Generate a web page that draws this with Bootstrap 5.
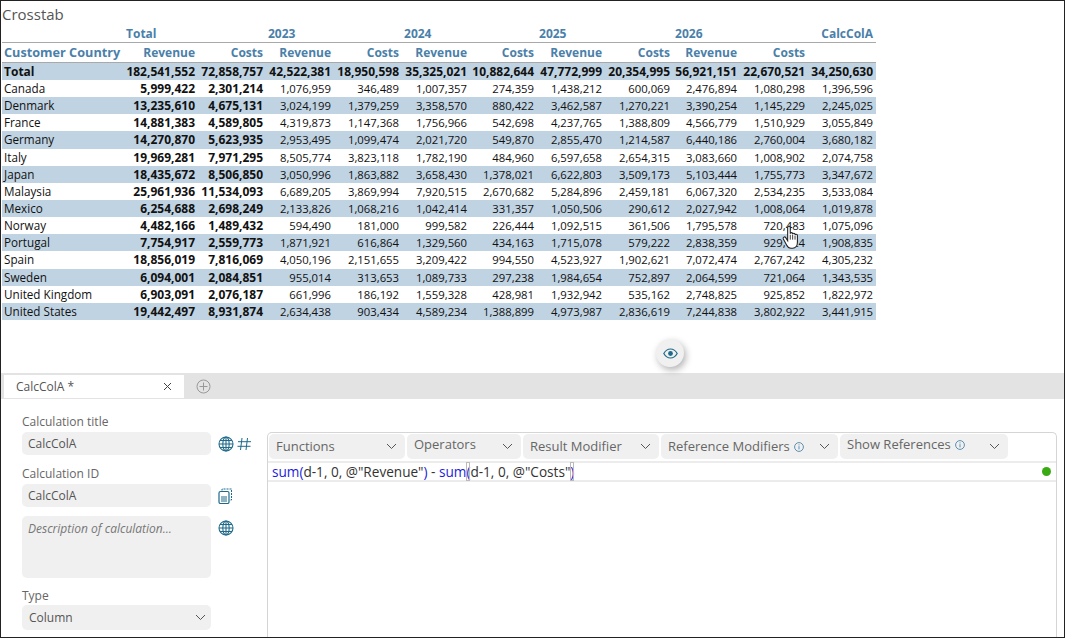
<!DOCTYPE html>
<html lang="en">
<head>
  <meta charset="UTF-8">
  <meta name="viewport" content="width=device-width, initial-scale=1.0">
  <title>Crosstab</title>
  <link href="https://cdn.jsdelivr.net/npm/bootstrap@5.3.0/dist/css/bootstrap.min.css" rel="stylesheet">
  <style>
    html, body { height: 100%; overflow: hidden; background: #fff; }
    body { font-family: "Open Sans", "Noto Sans", sans-serif; color: #444; }
    .app-frame { height: 638px; border: 1px solid #222; overflow: hidden; position: relative; }
    .top-pane { height: 372px; position: relative; flex: none; }
    .xtab-title { font-size: 15px; line-height: 20px; color: #555; padding: 3px 0 0 1px; height: 24px; }
    .xtab { table-layout: fixed; width: 874px; margin: 0 0 0 1px; border-collapse: collapse; font-size: 11.3px; color: #111; }
    .xtab td, .xtab th { padding: 0 1px 0 0; height: 17.15px; line-height: 17px; text-align: right; white-space: nowrap; overflow: visible; border: 0; background: transparent; color: inherit; box-shadow: none; }
    .xtab td:last-child { padding-right: 3px; }
    .xtab thead th { color: #4a80a9; font-size: 12px; font-weight: 700; }
    .xtab .head-top th { height: 17px; line-height: 17px; text-align: left; padding-left: 4px; border-bottom: 1px solid #a9a9a9; }
    .xtab .head-top th.calc-head { text-align: right; padding: 0 3px 0 0; }
    .xtab .head-sub th { height: 20px; border-bottom: 1px solid #a9a9a9; }
    .xtab .head-sub th:first-child { text-align: left; padding-left: 2px; font-size: 12.7px; }
    .xtab tbody td:first-child { text-align: left; padding-left: 2px; font-size: 11.7px; }
    .xtab tbody td.strong-cell, .xtab tbody tr:first-child td { font-weight: 700; font-size: 12px; }
    .xtab tbody tr:nth-child(odd) td { background: #c0d3e2; }
    .eye-btn { position: absolute; left: 655px; top: 338px; width: 28px; height: 28px; border-radius: 50%; background: #f0f0f0; box-shadow: 2px 3px 7px rgba(0,0,0,.3); }
    .hand-cursor { position: absolute; left: 780px; top: 224px; }
    .tab-strip { height: 26px; flex: none; background: #e3e3e3; padding: 2px 0 1px 3px; }
    .calc-tab { width: 180px; background: #fff; font-size: 12px; padding: 0 12px; color: #555; }
    .editor-area { flex: 1; padding: 15px 7px 0 21px; min-height: 0; }
    .form-side { width: 245px; flex: none; }
    .field-label { font-size: 12px; line-height: 16px; color: #666; margin-bottom: 2px; display: block; }
    .field-row { margin-bottom: 11px; }
    .field-row-tight { margin-bottom: 9px; }
    .type-label { margin-top: 10px; margin-bottom: 1px; }
    .soft-input { width: 189px; height: 23px; border: 0; border-radius: 5px; background-color: #f0f0f0; font-size: 12px; color: #555; padding: 0 6px; box-shadow: none; }
    .soft-input.desc-box { height: 62px; padding: 4px 6px; font-style: italic; resize: none; }
    .soft-input.desc-box::placeholder { color: #777; opacity: 1; }
    .soft-input.form-select { height: 25px; padding: 0 7px; background-size: 11px 7px; background-position: right 5px center; background-image: url("data:image/svg+xml,%3Csvg xmlns='http://www.w3.org/2000/svg' viewBox='0 0 11 7'%3E%3Cpath d='M1 1l4.5 4.5L10 1' fill='none' stroke='%23555' stroke-width='1'/%3E%3C/svg%3E"); }
    .side-icons { gap: 3px; margin-left: 7px; }
    .code-panel { width: 790px; flex: none; margin-top: 18px; border: 1px solid #d5d5d5; border-bottom: 0; border-radius: 5px 5px 0 0; padding: 1px 0 0 1px; height: 220px; }
    .tool-drop { height: 25px; background: #f0f0f0; border-radius: 5px; font-size: 13px; color: #666; padding: 0 8px 0 7px; border: 0; flex: none; }
    .tool-row { gap: 2px; }
    .code-line { height: 21px; margin: 2px 0 0 -1px; border-top: 2px solid #ececec; border-bottom: 2px solid #ececec; padding-left: 4px; font-size: 13.6px; line-height: 17px; color: #333; }
    .fn-word { color: #1c1cdc; }
    .paren { color: #1c1cdc; }
    .paren-match { color: #1c1cdc; outline: 1px solid #bbb; outline-offset: -1px; }
    .status-dot { width: 9px; height: 9px; border-radius: 50%; background: #3aaa13; margin-right: 5px; }
  </style>
</head>
<body>
  <div class="app-frame d-flex flex-column">
    <div class="top-pane">
      <div class="xtab-title">Crosstab</div>
      <table class="xtab" id="xtab">
        <colgroup>
          <col style="width:120px"><col style="width:74px"><col style="width:68px"><col style="width:68px"><col style="width:68px"><col style="width:68px"><col style="width:67px"><col style="width:68px"><col style="width:68px"><col style="width:67px"><col style="width:68px"><col style="width:70px">
        </colgroup>
        <thead>
          <tr class="head-top">
            <th></th><th colspan="2">Total</th><th colspan="2">2023</th><th colspan="2">2024</th><th colspan="2">2025</th><th colspan="2">2026</th><th class="calc-head">CalcColA</th>
          </tr>
          <tr class="head-sub">
            <th>Customer Country</th><th>Revenue</th><th>Costs</th><th>Revenue</th><th>Costs</th><th>Revenue</th><th>Costs</th><th>Revenue</th><th>Costs</th><th>Revenue</th><th>Costs</th><th></th>
          </tr>
        </thead>
        <tbody id="xtabBody"></tbody>
      </table>

      <svg class="hand-cursor" width="22" height="26" viewBox="0 0 20 24">
        <path d="M6 2.2c0-1.6 2.4-1.600 2.400 0v5.800c0-1.300 2.200-1.300 2.200 0v.6c0-1.300 2.200-1.300 2.200 0v.8c0-1.200 2.200-1.200 2.200.2v6.400c0 3-1.600 5.500-4.400 5.500H9c-2 0-3-1-4-3l-3-5.600c-.7-1.600 1.200-2.600 2.200-1.200L6 14.500z" fill="#fff" stroke="#222" stroke-width="1"/>
        <path d="M8.400 9v4.500M10.600 9v4.500M12.800 10v3.500" stroke="#222" stroke-width=".8" fill="none"/>
      </svg>

      <div class="eye-btn d-flex align-items-center justify-content-center">
        <svg width="15" height="11" viewBox="0 0 15 11">
          <path d="M.8 5.5C2.5 2.5 5 1 7.5 1s5 1.500 6.700 4.500C12.500 8.500 10 10 7.500 10S2.500 8.500.8 5.500z" fill="none" stroke="#1f6a8a" stroke-width="1.200"/>
          <circle cx="7.500" cy="5.500" r="2.400" fill="#1f6a8a"/>
        </svg>
      </div>
    </div>

    <div class="tab-strip d-flex align-items-stretch">
      <div class="calc-tab d-flex align-items-center justify-content-between">
        <span>CalcColA *</span>
        <svg width="9" height="9" viewBox="0 0 9 9"><path d="M1 1l7 7M8 1L1 8" stroke="#444" stroke-width="1"/></svg>
      </div>
      <div class="d-flex align-items-center ms-2 ps-1">
        <svg width="15" height="15" viewBox="0 0 15 15"><circle cx="7.500" cy="7.500" r="6.500" fill="none" stroke="#999"/><path d="M7.500 3.500v8M3.500 7.500h8" stroke="#999"/></svg>
      </div>
    </div>

    <div class="editor-area d-flex">
      <div class="form-side">
        <label class="field-label" for="calcTitle">Calculation title</label>
        <div class="d-flex align-items-center field-row">
          <input id="calcTitle" class="form-control soft-input" value="CalcColA">
          <div class="d-flex align-items-center side-icons">
            <svg width="16" height="16" viewBox="0 0 16 16"><g fill="none" stroke="#1f6a8a" stroke-width="1.100"><circle cx="8" cy="8" r="7"/><ellipse cx="8" cy="8" rx="3.200" ry="7"/><path d="M1 8h14M2 4.500h12M2 11.500h12M8 1v14"/></g></svg>
            <svg width="14" height="14" viewBox="0 0 14 14"><path d="M5 1L3.500 13M10.500 1L9 13M1 4.700h13M0.500 9.300h13" stroke="#1f6a8a" stroke-width="1" fill="none"/></svg>
          </div>
        </div>
        <label class="field-label" for="calcId">Calculation ID</label>
        <div class="d-flex align-items-center field-row-tight">
          <input id="calcId" class="form-control soft-input" value="CalcColA">
          <div class="d-flex align-items-center side-icons">
            <svg width="15" height="16" viewBox="0 0 15 16"><path d="M4 2.500V1h9.500v11H12" fill="none" stroke="#1f6a8a" stroke-width="1" stroke-dasharray="2 1"/><rect x="1" y="3.500" width="10" height="12" rx="1.500" fill="none" stroke="#1f6a8a" stroke-width="1.200"/><path d="M3 9h6M3 11h6M3 13h6" stroke="#1f6a8a" stroke-width="1"/></svg>
          </div>
        </div>
        <div class="d-flex align-items-start">
          <textarea class="form-control soft-input desc-box" placeholder="Description of calculation..."></textarea>
          <div class="d-flex align-items-center side-icons mt-1">
            <svg width="16" height="16" viewBox="0 0 16 16"><g fill="none" stroke="#1f6a8a" stroke-width="1.100"><circle cx="8" cy="8" r="7"/><ellipse cx="8" cy="8" rx="3.200" ry="7"/><path d="M1 8h14M2 4.500h12M2 11.500h12M8 1v14"/></g></svg>
          </div>
        </div>
        <label class="field-label type-label" for="calcType">Type</label>
        <select id="calcType" class="form-select soft-input"><option>Column</option></select>
      </div>

      <div class="code-panel">
        <div class="d-flex tool-row" id="toolRow"></div>
        <div class="code-line d-flex align-items-center justify-content-between">
          <div><span class="fn-word">sum</span><span class="paren">(</span>d-1, 0, @"Revenue"<span class="paren">)</span> - <span class="fn-word">sum</span><span class="paren-match">(</span>d-1, 0, @"Costs"<span class="paren-match">)</span></div>
          <span class="status-dot"></span>
        </div>
      </div>
    </div>
  </div>

  <script>
    // Crosstab rows: country, then total rev/costs, then rev/costs per year, then CalcColA
    const rows = [
      ['Total','182,541,552','72,858,757','42,522,381','18,950,598','35,325,021','10,882,644','47,772,999','20,354,995','56,921,151','22,670,521','34,250,630'],
      ['Canada','5,999,422','2,301,214','1,076,959','346,489','1,007,357','274,359','1,438,212','600,069','2,476,894','1,080,298','1,396,596'],
      ['Denmark','13,235,610','4,675,131','3,024,199','1,379,259','3,358,570','880,422','3,462,587','1,270,221','3,390,254','1,145,229','2,245,025'],
      ['France','14,881,383','4,589,805','4,319,873','1,147,368','1,756,966','542,698','4,237,765','1,388,809','4,566,779','1,510,929','3,055,849'],
      ['Germany','14,270,870','5,623,935','2,953,495','1,099,474','2,021,720','549,870','2,855,470','1,214,587','6,440,186','2,760,004','3,680,182'],
      ['Italy','19,969,281','7,971,295','8,505,774','3,823,118','1,782,190','484,960','6,597,658','2,654,315','3,083,660','1,008,902','2,074,758'],
      ['Japan','18,435,672','8,506,850','3,050,996','1,863,882','3,658,430','1,378,021','6,622,803','3,509,173','5,103,444','1,755,773','3,347,672'],
      ['Malaysia','25,961,936','11,534,093','6,689,205','3,869,994','7,920,515','2,670,682','5,284,896','2,459,181','6,067,320','2,534,235','3,533,084'],
      ['Mexico','6,254,688','2,698,249','2,133,826','1,068,216','1,042,414','331,357','1,050,506','290,612','2,027,942','1,008,064','1,019,878'],
      ['Norway','4,482,166','1,489,432','594,490','181,000','999,582','226,444','1,092,515','361,506','1,795,578','720,483','1,075,096'],
      ['Portugal','7,754,917','2,559,773','1,871,921','616,864','1,329,560','434,163','1,715,078','579,222','2,838,359','929,124','1,908,835'],
      ['Spain','18,856,019','7,816,069','4,050,196','2,151,655','3,209,422','994,550','4,523,927','1,902,621','7,072,474','2,767,242','4,305,232'],
      ['Sweden','6,094,001','2,084,851','955,014','313,653','1,089,733','297,238','1,984,654','752,897','2,064,599','721,064','1,343,535'],
      ['United Kingdom','6,903,091','2,076,187','661,996','186,192','1,559,328','428,981','1,932,942','535,162','2,748,825','925,852','1,822,972'],
      ['United States','19,442,497','8,931,874','2,634,438','903,434','4,589,234','1,388,899','4,973,987','2,836,619','7,244,838','3,802,922','3,441,915']
    ];

    const body = document.getElementById('xtabBody');
    rows.forEach(row => {
      const tr = document.createElement('tr');
      row.forEach((val, i) => {
        const td = document.createElement('td');
        td.innerText = val;
        if (i === 1 || i === 2) td.className = 'strong-cell';
        tr.appendChild(td);
      });
      body.appendChild(tr);
    });

    // Toolbar dropdowns: label, width, whether it has the info icon, text raised a bit or not
    const tools = [
      ['Functions', 136, false, false],
      ['Operators', 114, false, true],
      ['Result Modifier', 136, false, false],
      ['Reference Modifiers', 177, true, false],
      ['Show References', 168, true, true]
    ];
    const info = '<svg class="ms-1" width="10" height="10" viewBox="0 0 10 10"><circle cx="5" cy="5" r="4.400" fill="none" stroke="#5b8fb0"/><path d="M5 4.200v3.200M5 2.400v1" stroke="#5b8fb0"/></svg>';
    const chev = '<svg width="11" height="7" viewBox="0 0 11 7"><path d="M1 1l4.500 4.500L10 1" fill="none" stroke="#555" stroke-width="1"/></svg>';
    const toolRow = document.getElementById('toolRow');
    tools.forEach(([label, width, hasInfo, raised]) => {
      const btn = document.createElement('div');
      btn.className = 'tool-drop d-flex align-items-center justify-content-between';
      btn.style.width = width + 'px';
      btn.innerHTML = `<span class="d-flex align-items-center"${raised ? ' style="margin-top:-3px"' : ''}>${label}${hasInfo ? info : ''}</span>${chev}`;
      toolRow.appendChild(btn);
    });
  </script>
  <script src="https://cdn.jsdelivr.net/npm/bootstrap@5.3.0/dist/js/bootstrap.bundle.min.js"></script>
</body>
</html>
